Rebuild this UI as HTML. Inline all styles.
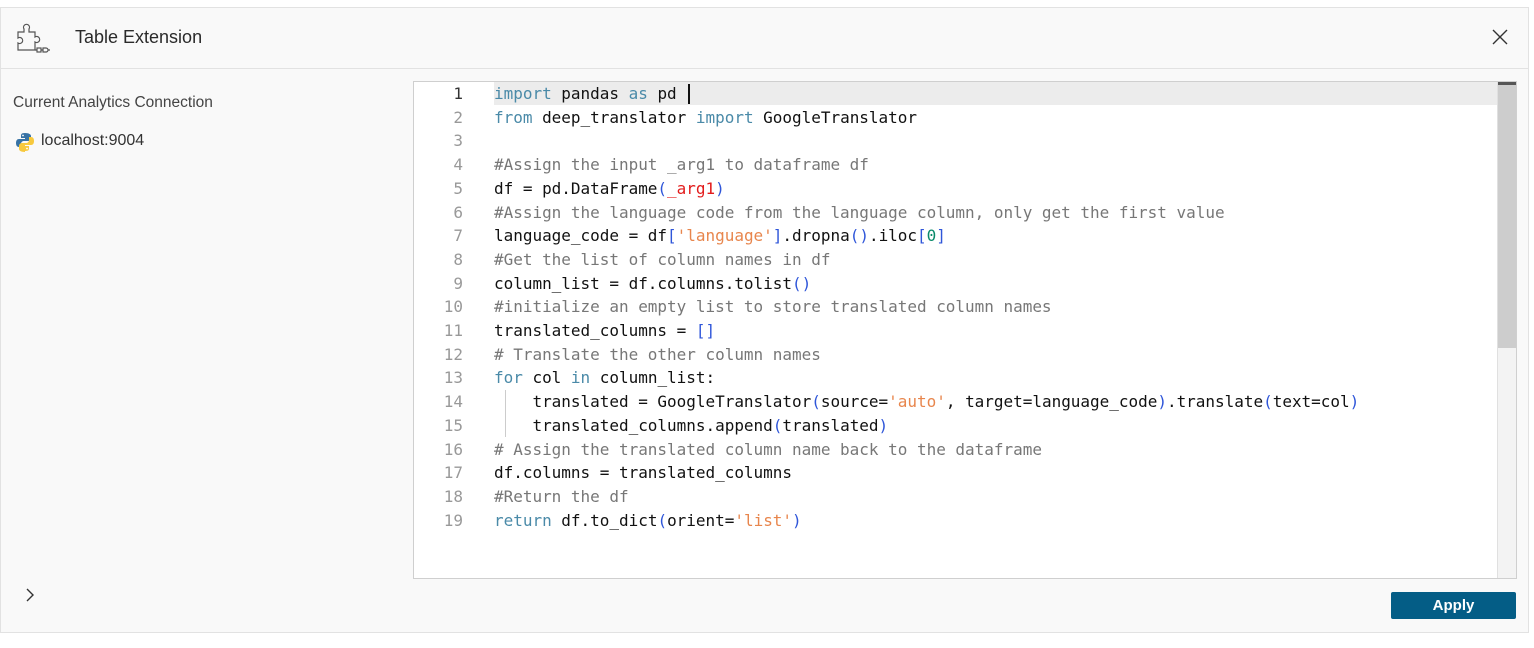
<!DOCTYPE html>
<html><head><meta charset="utf-8"><style>
*{margin:0;padding:0;box-sizing:border-box}
body{width:1534px;height:648px;background:#fff;font-family:"Liberation Sans",sans-serif;position:relative;overflow:hidden}
.frame{position:absolute;left:0;top:7px;width:1529px;height:626px;border:1px solid #e2e2e2;background:#f9f9f9}
.hdr{position:absolute;left:0;top:0;width:100%;height:61px;border-bottom:1px solid #e2e2e2}
.title{position:absolute;left:74px;top:19px;font-size:18px;color:#2a2a2a}
.lbl{position:absolute;left:12px;top:86px;font-size:15.5px;color:#444}
.host{position:absolute;left:40px;top:124px;font-size:16px;color:#333}
.ed{position:absolute;left:412px;top:73px;width:1104px;height:498px;border:1px solid #cfcfcf;background:#fff;overflow:hidden}
.code{position:absolute;left:0;top:0;font-family:"DejaVu Sans Mono",monospace;font-size:16px;line-height:23.7px;white-space:pre;letter-spacing:-0.02px}
.ln{position:absolute;left:0;width:49px;text-align:right;color:#999}
.tx{position:absolute;left:80px;color:#111}
.hl{position:absolute;left:80px;top:0;width:1004px;height:23px;background:#ececec}
.k{color:#4a8aa8}.c{color:#777}.s{color:#e8864d}.b{color:#2f56d9}.r{color:#e21b1b}
.sb{position:absolute;left:1083px;top:0;width:19px;height:496px;background:#f3f3f3;border-left:1px solid #e0e0e0}
.th{position:absolute;left:0;top:0;width:18px;height:266px;background:#cdcdcd;border-top:3px solid #555}
.btn{position:absolute;left:1390px;top:584px;width:125px;height:27px;background:#045d86;border-radius:2px;color:#fff;font-weight:bold;font-size:15px;text-align:center;line-height:27px}
</style></head><body>
<div class="frame">
 <div class="hdr">
  <svg style="position:absolute;left:14px;top:15px" width="38" height="34" viewBox="0 0 38 34" fill="none" stroke="#555" stroke-width="1.2">
   <path d="M3 9 H9 V6 a3 3 0 1 1 5 0 V9 H20 V14 a3 3 0 1 1 0 5 V27 H3 V20 a3 3 0 1 0 0 -5 Z"/>
   <path d="M20 27 H22 M26 27 H28 M33 27 H35"/><rect x="22" y="25" width="4" height="4"/><path d="M28 25 h3 a2 2 0 0 1 0 4 h-3 Z"/>
  </svg>
  <div class="title">Table Extension</div>
  <svg style="position:absolute;left:1491px;top:21px" width="16" height="16" viewBox="0 0 16 16" stroke="#333" stroke-width="1.4"><path d="M1 1L15 15M15 1L1 15"/></svg>
 </div>
 <div class="lbl">Current Analytics Connection</div>
 <svg style="position:absolute;left:14px;top:124px" width="20" height="20" viewBox="0 0 20 20">
  <path d="M10 1c-4 0-4 1.5-4 3v2h4v1H4c-2 0-3 1.5-3 4s1 4 3 4h2v-3c0-2 1.5-3 3-3h4c1.5 0 3-1 3-3V4c0-1.5-2-3-6-3z" fill="#3772a4"/>
  <path d="M10 19c4 0 4-1.5 4-3v-2h-4v-1h6c2 0 3-1.5 3-4s-1-4-3-4h-2v3c0 2-1.5 3-3 3H7c-1.5 0-3 1-3 3v3c0 1.5 2 3 6 3z" fill="#f7c93e"/>
  <circle cx="8" cy="3.5" r="0.9" fill="#fff"/><circle cx="12" cy="16.5" r="0.9" fill="#fff"/>
 </svg>
 <div class="host">localhost:9004</div>
 <svg style="position:absolute;left:24px;top:580px" width="10" height="14" viewBox="0 0 10 14" fill="none" stroke="#333" stroke-width="1.4"><path d="M2 1L8 7L2 13"/></svg>
 <div class="ed">
  <div class="hl"></div>
  <div style="position:absolute;left:274px;top:2px;width:2px;height:20px;background:#111"></div>
  <div style="position:absolute;left:91px;top:308px;width:1px;height:47px;background:#ccc"></div>
  <div class="code" style="top:0">
<div class="ln" style="top:0;color:#333">1</div><div class="tx" style="top:0"><span class="k">import</span> pandas <span class="k">as</span> pd</div>
<div class="ln" style="top:23.7px">2</div><div class="tx" style="top:23.7px"><span class="k">from</span> deep_translator <span class="k">import</span> GoogleTranslator</div>
<div class="ln" style="top:47.4px">3</div>
<div class="ln" style="top:71.1px">4</div><div class="tx c" style="top:71.1px">#Assign the input _arg1 to dataframe df</div>
<div class="ln" style="top:94.8px">5</div><div class="tx" style="top:94.8px">df = pd.DataFrame<span class="b">(</span><span class="r">_arg1</span><span class="b">)</span></div>
<div class="ln" style="top:118.5px">6</div><div class="tx c" style="top:118.5px">#Assign the language code from the language column, only get the first value</div>
<div class="ln" style="top:142.2px">7</div><div class="tx" style="top:142.2px">language_code = df<span class="b">[</span><span class="s">'language'</span><span class="b">]</span>.dropna<span class="b">()</span>.iloc<span class="b">[</span><span style="color:#0a8a6a">0</span><span class="b">]</span></div>
<div class="ln" style="top:165.9px">8</div><div class="tx c" style="top:165.9px">#Get the list of column names in df</div>
<div class="ln" style="top:189.6px">9</div><div class="tx" style="top:189.6px">column_list = df.columns.tolist<span class="b">()</span></div>
<div class="ln" style="top:213.3px">10</div><div class="tx c" style="top:213.3px">#initialize an empty list to store translated column names</div>
<div class="ln" style="top:237px">11</div><div class="tx" style="top:237px">translated_columns = <span class="b">[]</span></div>
<div class="ln" style="top:260.7px">12</div><div class="tx c" style="top:260.7px"># Translate the other column names</div>
<div class="ln" style="top:284.4px">13</div><div class="tx" style="top:284.4px"><span class="k">for</span> col <span class="k">in</span> column_list:</div>
<div class="ln" style="top:308.1px">14</div><div class="tx" style="top:308.1px">    translated = GoogleTranslator<span class="b">(</span>source=<span class="s">'auto'</span>, target=language_code<span class="b">)</span>.translate<span class="b">(</span>text=col<span class="b">)</span></div>
<div class="ln" style="top:331.8px">15</div><div class="tx" style="top:331.8px">    translated_columns.append<span class="b">(</span>translated<span class="b">)</span></div>
<div class="ln" style="top:355.5px">16</div><div class="tx c" style="top:355.5px"># Assign the translated column name back to the dataframe</div>
<div class="ln" style="top:379.2px">17</div><div class="tx" style="top:379.2px">df.columns = translated_columns</div>
<div class="ln" style="top:402.9px">18</div><div class="tx c" style="top:402.9px">#Return the df</div>
<div class="ln" style="top:426.6px">19</div><div class="tx" style="top:426.6px"><span class="k">return</span> df.to_dict<span class="b">(</span>orient=<span class="s">'list'</span><span class="b">)</span></div>
  </div>
  <div class="sb"><div class="th"></div></div>
 </div>
 <div class="btn">Apply</div>
</div>
</body></html>
